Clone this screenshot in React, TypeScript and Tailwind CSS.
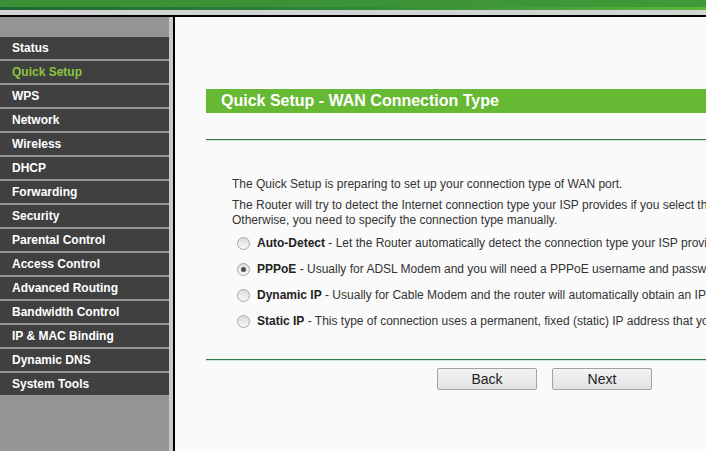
import React from "react";

const menu = [
  "Status",
  "Quick Setup",
  "WPS",
  "Network",
  "Wireless",
  "DHCP",
  "Forwarding",
  "Security",
  "Parental Control",
  "Access Control",
  "Advanced Routing",
  "Bandwidth Control",
  "IP & MAC Binding",
  "Dynamic DNS",
  "System Tools",
];

function Radio({ checked }: { checked?: boolean }) {
  return (
    <span className="relative flex h-[13px] w-[13px] shrink-0 items-center justify-center rounded-full border border-[#a9a9a9] bg-gradient-to-b from-[#dcdcdc] to-[#f8f8f8]">
      {checked && (
        <span className="h-[5px] w-[5px] rounded-full bg-[#505050]" />
      )}
    </span>
  );
}

const options = [
  {
    label: "Auto-Detect",
    text: " - Let the Router automatically detect the connection type your ISP provides.",
  },
  {
    label: "PPPoE",
    text: " - Usually for ADSL Modem and you will need a PPPoE username and password from your ISP.",
    checked: true,
  },
  {
    label: "Dynamic IP",
    text: " - Usually for Cable Modem and the router will automatically obtain an IP address from your ISP.",
  },
  {
    label: "Static IP",
    text: " - This type of connection uses a permanent, fixed (static) IP address that your ISP assigned.",
  },
];

export default function App() {
  return (
    <div className="flex h-[451px] w-[706px] flex-col overflow-hidden bg-[#fafafa] font-['Liberation_Sans',Arial,sans-serif]">
      <div className="h-[7px] shrink-0 bg-gradient-to-r from-[#3a9035] via-[#3c9337] to-[#409a38]" />
      <div className="h-[3px] shrink-0 bg-gradient-to-r from-[#1c6736] via-[#2f8838] to-[#5db73b]" />
      <div className="h-[5px] shrink-0 bg-[#d3d3d3]" />
      <div className="h-[2px] shrink-0 bg-black" />
      <div className="flex min-h-0 flex-1">
        <aside className="flex w-[169px] shrink-0 flex-col bg-[#959595]">
          <div className="h-[20px]" />
          {menu.map((m) => (
            <div
              key={m}
              className={`mb-[2px] flex h-[22px] items-center bg-[#404040] pl-[12px] text-[12px] font-bold ${
                m === "Quick Setup" ? "text-[#8bc53f]" : "text-white"
              }`}
            >
              {m}
            </div>
          ))}
        </aside>
        <div className="w-[4px] shrink-0 bg-[#c9c9c9]" />
        <div className="w-[2px] shrink-0 bg-black" />
        <main className="min-w-0 flex-1 overflow-hidden pl-[31px] pt-[72px]">
          <div className="w-[700px]">
            <div className="flex h-[24px] items-center bg-[#66b933] pl-[15px] text-[16px] font-bold text-white">
              Quick Setup - WAN Connection Type
            </div>
            <div className="mt-[26px] h-[1px] bg-[#2e7d4c]" />
            <div className="h-[1px] bg-[#cfe5d4]" />
            <div className="pl-[26px] pt-[36px] text-[12px] leading-[15px] text-[#333]">
              <p className="whitespace-nowrap">
                The Quick Setup is preparing to set up your connection type of WAN port.
              </p>
              <p className="mt-[6px] whitespace-nowrap">
                The Router will try to detect the Internet connection type your ISP provides if you select the Auto-Detect option.
                <br />
                Otherwise, you need to specify the connection type manually.
              </p>
            </div>
            <div className="mt-[2px] pl-[31px] text-[12px] text-[#333]">
              {options.map((o) => (
                <div key={o.label} className="flex h-[26px] items-center gap-[7px] whitespace-nowrap">
                  <Radio checked={o.checked} />
                  <span>
                    <b className="text-[#222]">{o.label}</b>
                    {o.text}
                  </span>
                </div>
              ))}
            </div>
            <div className="mt-[25px] h-[1px] bg-[#2e7d4c]" />
            <div className="h-[1px] bg-[#cfe5d4]" />
            <div className="mt-[7px] flex gap-[15px] pl-[231px]">
              <button className="h-[22px] w-[100px] rounded-[2px] border border-[#a3a3a3] bg-gradient-to-b from-[#f4f4f4] to-[#e2e2e2] text-[14px] text-[#222]">
                Back
              </button>
              <button className="h-[22px] w-[100px] rounded-[2px] border border-[#a3a3a3] bg-gradient-to-b from-[#f4f4f4] to-[#e2e2e2] text-[14px] text-[#222]">
                Next
              </button>
            </div>
          </div>
        </main>
      </div>
    </div>
  );
}
